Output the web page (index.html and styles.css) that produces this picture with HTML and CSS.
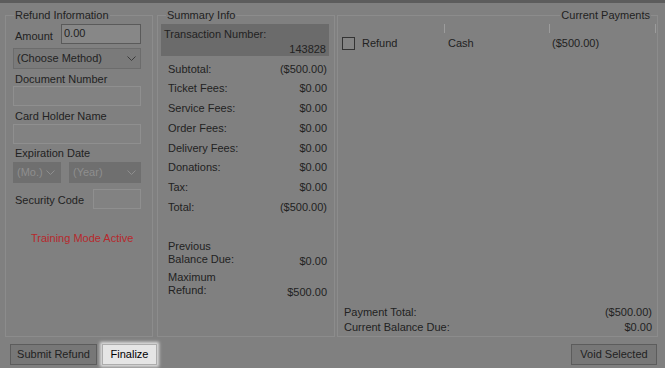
FILE: index.html
```html
<!DOCTYPE html>
<html lang="en">
<head>
    <meta charset="UTF-8">
    <meta name="viewport" content="width=device-width, initial-scale=1.0">
    <title>Refund</title>
    <link rel="stylesheet" href="styles.css">
</head>
<body>
    <div class="titlebar"></div>

    <div class="panels">
        <fieldset class="group refund">
            <legend>Refund Information</legend>
            <div class="refund-body">
                <div class="amount-row">
                    <label for="amount">Amount</label>
                    <input type="text" id="amount" class="textbox active amount" value="0.00">
                </div>

                <div class="combo method">
                    <span>(Choose Method)</span>
                    <svg viewBox="0 0 9 5"><polyline points="0.5,0.5 4.5,4.5 8.5,0.5"/></svg>
                </div>

                <label class="field-label doc-label" for="doc">Document Number</label>
                <input type="text" id="doc" class="textbox wide" disabled>

                <label class="field-label card-label" for="holder">Card Holder Name</label>
                <input type="text" id="holder" class="textbox wide card-box" disabled>

                <label class="field-label exp-label">Expiration Date</label>
                <div class="exp-row">
                    <div class="combo disabled mo">
                        <span>(Mo.)</span>
                        <svg viewBox="0 0 9 5"><polyline points="0.5,0.5 4.5,4.5 8.5,0.5"/></svg>
                    </div>
                    <div class="combo disabled year">
                        <span>(Year)</span>
                        <svg viewBox="0 0 9 5"><polyline points="0.5,0.5 4.5,4.5 8.5,0.5"/></svg>
                    </div>
                </div>

                <div class="security-row">
                    <label for="cvv">Security Code</label>
                    <input type="text" id="cvv" class="textbox cvv" disabled>
                </div>

                <div class="training">Training Mode Active</div>
            </div>
        </fieldset>

        <fieldset class="group summary">
            <legend>Summary Info</legend>
            <div class="summary-body">
                <div class="txn">
                    <span>Transaction Number:</span>
                    <span class="txn-number">143828</span>
                </div>

                <div class="amounts">
                    <div class="line"><span>Subtotal:</span><span>($500.00)</span></div>
                    <div class="line"><span>Ticket Fees:</span><span>$0.00</span></div>
                    <div class="line"><span>Service Fees:</span><span>$0.00</span></div>
                    <div class="line"><span>Order Fees:</span><span>$0.00</span></div>
                    <div class="line"><span>Delivery Fees:</span><span>$0.00</span></div>
                    <div class="line"><span>Donations:</span><span>$0.00</span></div>
                    <div class="line"><span>Tax:</span><span>$0.00</span></div>
                    <div class="line"><span>Total:</span><span>($500.00)</span></div>

                    <div class="multi previous">
                        <span>Previous<br>Balance Due:</span>
                        <span class="value">$0.00</span>
                    </div>
                    <div class="multi maximum">
                        <span>Maximum<br>Refund:</span>
                        <span class="value">$500.00</span>
                    </div>
                </div>
            </div>
        </fieldset>

        <fieldset class="group payments">
            <legend>Current Payments</legend>
            <div class="payments-body">
                <div class="list-head"><span></span><span></span><span></span></div>
                <div class="list-row">
                    <div class="cell first"><span class="checkbox"></span>Refund</div>
                    <div class="cell second">Cash</div>
                    <div class="cell third">($500.00)</div>
                </div>

                <div class="totals">
                    <div class="line"><span>Payment Total:</span><span>($500.00)</span></div>
                    <div class="line"><span>Current Balance Due:</span><span>$0.00</span></div>
                </div>
            </div>
        </fieldset>
    </div>

    <div class="actions">
        <button class="btn submit">Submit Refund</button>
        <button class="btn focus">Finalize</button>
        <button class="btn void">Void Selected</button>
    </div>
</body>
</html>
```

FILE: styles.css
```css
* {
    box-sizing: border-box;
}

body {
    margin: 0;
    width: 665px;
    height: 368px;
    overflow: hidden;
    background-color: #808080;
    font-family: "Liberation Sans", Arial, sans-serif;
    font-size: 11px;
    line-height: 13px;
    color: #222;
}

.titlebar {
    height: 3px;
    background-color: #5c5c5c;
}

.panels {
    display: flex;
    height: 328px;
    margin-top: 6px;
    padding-left: 5px;
}

.group {
    margin: 0;
    padding: 0;
    min-width: 0;
    border: 1px solid #8c8c8c;
    display: flex;
    flex-direction: column;
}

.group legend {
    margin-left: 8px;
    padding: 0 1px;
    line-height: 13px;
}

.refund {
    width: 148px;
}

.summary {
    width: 178px;
    margin-left: 4px;
}

.payments {
    width: 321px;
    margin-left: 2px;
}

.payments legend {
    margin-left: auto;
    margin-right: 6px;
}

/* Refund information */
.refund-body {
    display: flex;
    flex-direction: column;
    align-items: flex-start;
    padding: 2px 0 0 7px;
}

.amount-row,
.security-row {
    display: flex;
    width: 128px;
    height: 20px;
}

.amount-row label {
    margin: 6px 0 0 2px;
}

.security-row {
    margin-top: 6px;
}

.security-row label {
    margin: 5px 0 0 2px;
}

.textbox {
    height: 20px;
    margin: 0;
    padding: 1px 2px 3px;
    border: 1px solid #8f8f8f;
    border-radius: 0;
    background-color: #828282;
    font: inherit;
    color: #222;
    outline: none;
}

.textbox.active {
    border-color: #5a5a5a;
    background-color: #878787;
}

.amount {
    width: 80px;
    margin-left: auto;
}

.cvv {
    width: 48px;
    margin-left: auto;
}

.wide {
    width: 128px;
}

.combo {
    display: flex;
    align-items: center;
    justify-content: space-between;
    height: 21px;
    padding: 0 4px 0 3px;
    background-color: #7a7a7a;
    border: 1px solid #6c6c6c;
}

.combo svg {
    width: 9px;
    height: 5px;
    fill: none;
    stroke: #3a3a3a;
    stroke-width: 1;
}

.combo.method {
    width: 128px;
    margin-top: 4px;
}

.combo.disabled {
    background-color: #6f6f6f;
    border-color: #6f6f6f;
    color: #8e8e8e;
}

.combo.disabled svg {
    stroke: #8e8e8e;
}

.field-label {
    margin-left: 2px;
}

.doc-label {
    margin-top: 4px;
}

.card-label {
    margin-top: 4px;
}

.card-box {
    margin-top: 1px;
}

.exp-label {
    margin-top: 3px;
}

.exp-row {
    display: flex;
    gap: 8px;
    margin-top: 2px;
}

.mo {
    width: 48px;
    padding-right: 5px;
}

.year {
    width: 72px;
}

.training {
    margin: 23px 0 0 18px;
    color: #b8282c;
}

/* Summary info */
.summary-body {
    padding-top: 2px;
}

.txn {
    display: flex;
    flex-direction: column;
    justify-content: space-between;
    width: 168px;
    height: 32px;
    margin-left: 3px;
    padding: 4px 3px 0;
    background-color: #6b6b6b;
}

.txn-number {
    text-align: right;
}

.amounts {
    margin-top: 3.5px;
    padding: 0 7px 0 10px;
}

.amounts .line {
    display: flex;
    justify-content: space-between;
    line-height: 19.8px;
}

.multi {
    display: flex;
    justify-content: space-between;
    align-items: flex-end;
}

.multi .value {
    margin-bottom: -2px;
}

.previous {
    margin-top: 22px;
}

.maximum {
    margin-top: 5px;
}

/* Current payments */
.payments-body {
    flex: 1;
    display: flex;
    flex-direction: column;
    padding-bottom: 1px;
}

.list-head,
.list-row {
    display: grid;
    grid-template-columns: 107px 105px 106px;
}

.list-head {
    height: 9px;
    margin-top: 2px;
}

.list-head span {
    border-right: 1px solid #9c9c9c;
}

.list-row {
    margin-top: 4px;
    align-items: center;
}

.cell.first {
    display: flex;
    align-items: center;
    padding-left: 4px;
}

.cell.second {
    padding-left: 3px;
}

.cell.third {
    padding-left: 2px;
}

.checkbox {
    width: 13px;
    height: 13px;
    margin-right: 7px;
    border: 1px solid #333;
    background-color: #848484;
}

.totals {
    margin-top: auto;
    padding: 0 5px 0 6px;
}

.totals .line {
    display: flex;
    justify-content: space-between;
    line-height: 15px;
}

/* Buttons */
.actions {
    display: flex;
    gap: 5px;
    margin-top: 7px;
    padding: 0 8px 0 10px;
}

.btn {
    height: 21px;
    padding: 0;
    font: inherit;
    color: #222;
    background-color: #777;
    border: 1px solid #5c5c5c;
    border-radius: 0;
}

.submit {
    width: 87px;
}

.btn.focus {
    width: 55px;
    color: #000;
    background-color: #e5e5e5;
    border-color: #adadad;
    box-shadow: 0 0 3px 2px rgba(255, 255, 255, 0.75);
}

.void {
    width: 86px;
    margin-left: auto;
}
```
